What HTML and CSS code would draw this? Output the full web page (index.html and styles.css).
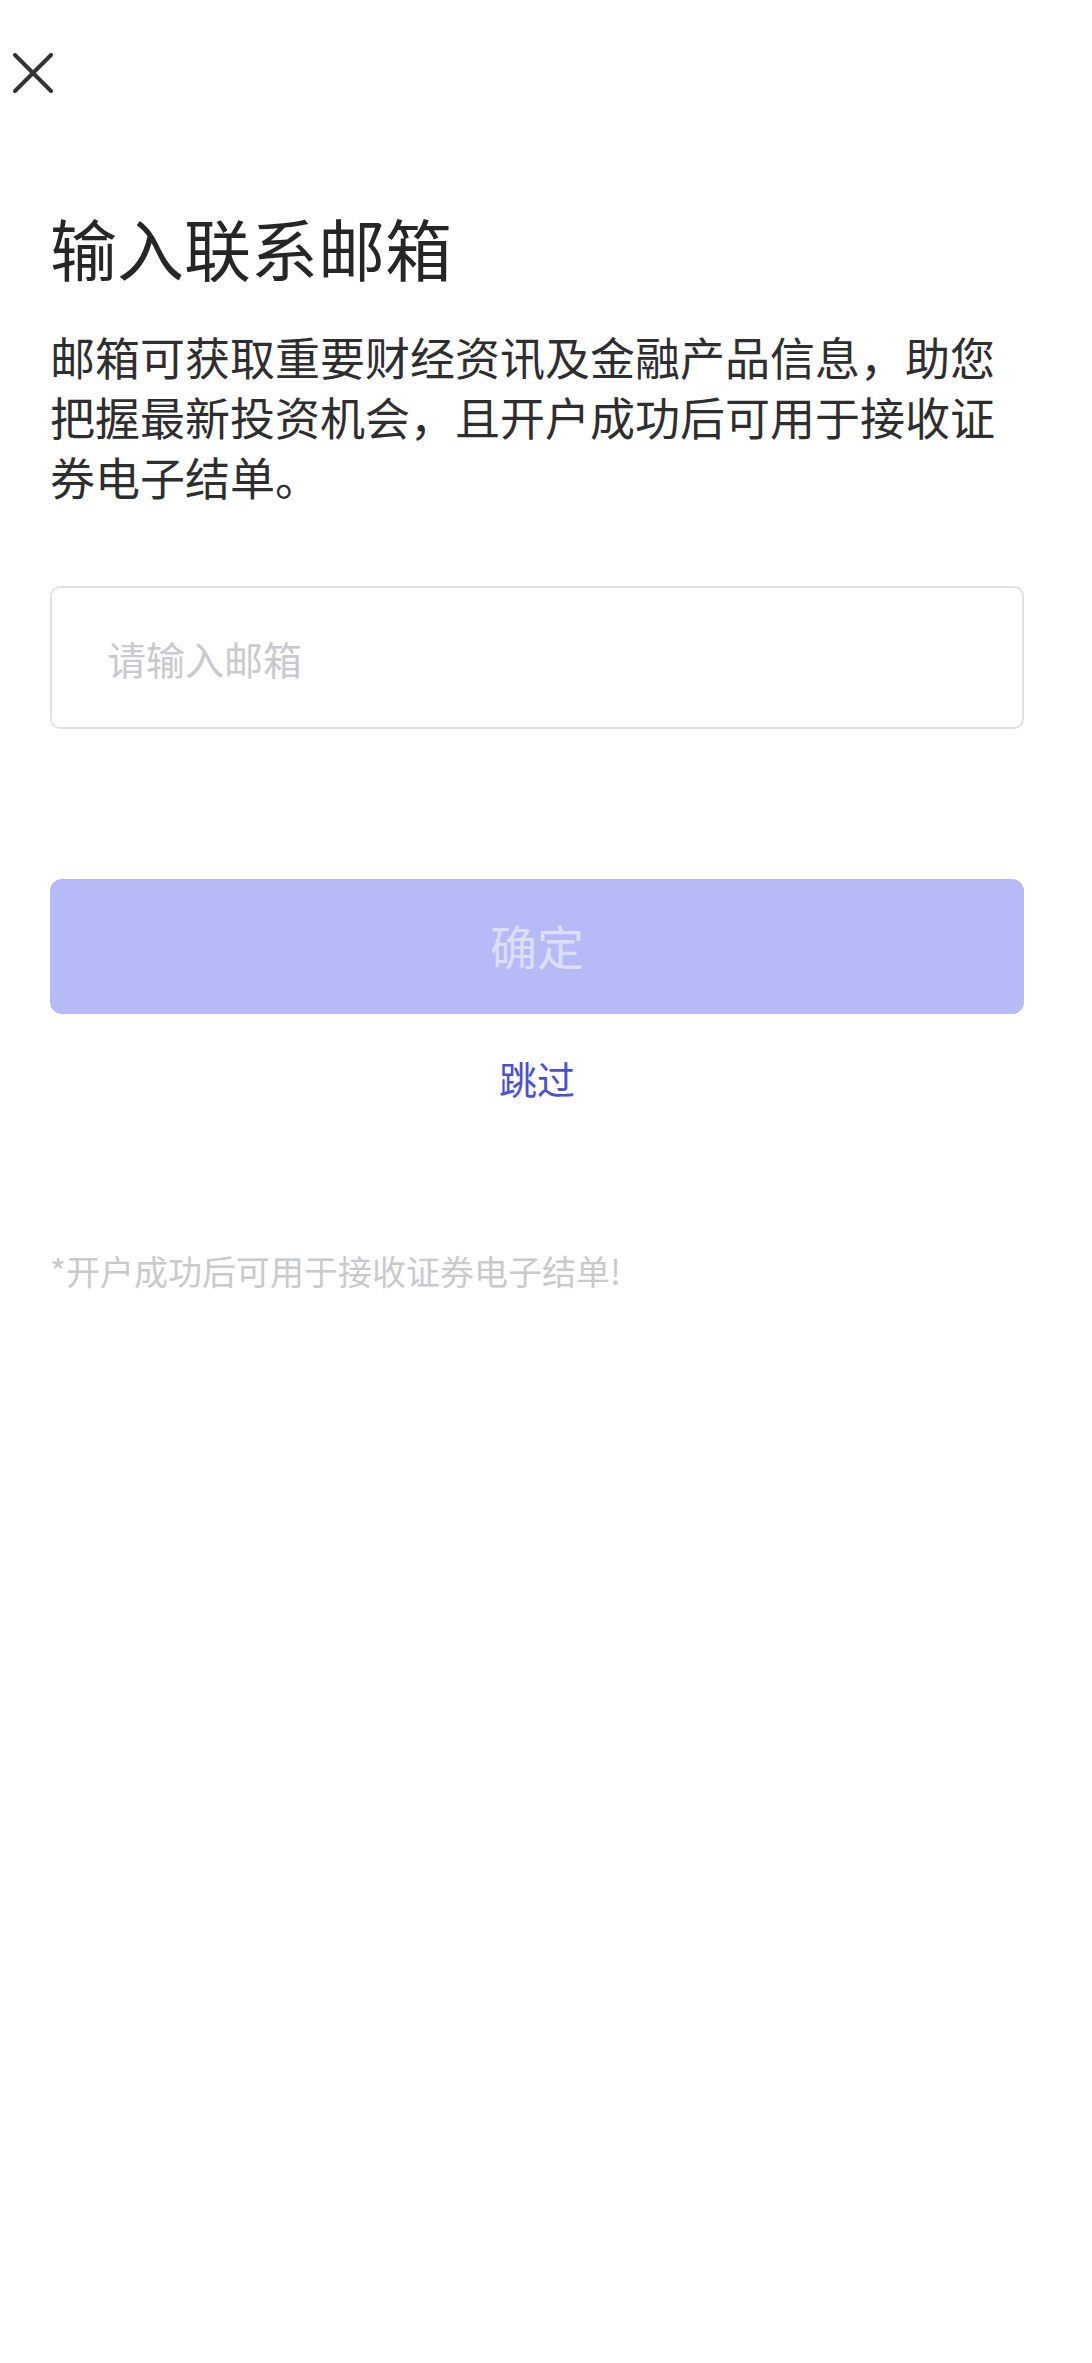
FILE: index.html
```html
<!DOCTYPE html>
<html lang="zh-CN">
<head>
    <meta charset="UTF-8">
    <meta name="viewport" content="width=device-width, initial-scale=1.0">
    <title>输入联系邮箱</title>
    <link rel="stylesheet" href="styles.css">
</head>
<body>
    <div class="top-bar">
        <a href="#" class="close" aria-label="关闭">
            <svg width="40" height="40" viewBox="0 0 40 40">
                <path d="M2 2 L38 38 M38 2 L2 38" stroke="#333338" stroke-width="4" stroke-linecap="round" fill="none"/>
            </svg>
        </a>
    </div>

    <div class="container">
        <h1 class="title">输入联系邮箱</h1>
        <p class="desc">邮箱可获取重要财经资讯及金融产品信息，助您把握最新投资机会，且开户成功后可用于接收证券电子结单。</p>

        <form class="email-form" onsubmit="return false">
            <input type="email" class="email-input" placeholder="请输入邮箱">
            <button type="submit" class="submit-btn" disabled>确定</button>
        </form>

        <div class="skip">
            <a href="#">跳过</a>
        </div>

        <p class="note">*开户成功后可用于接收证券电子结单!</p>
    </div>
</body>
</html>
```

FILE: styles.css
```css
/* 邮箱输入页 */
body {
    margin: 0;
    background-color: #fff;
    font-family: "Noto Sans CJK SC", "Noto Sans", sans-serif;
    color: #333;
}
.top-bar {
    padding: 53px 0 0 13px;
    height: 40px;
}
.close {
    display: block;
    width: 40px;
    height: 40px;
}
.close svg {
    display: block;
}
.container {
    padding: 0 68px 0 50px;
}
.title {
    margin: 114px 0 0;
    font-size: 67px;
    line-height: 80px;
    font-weight: normal;
    color: #262629;
}
.desc {
    margin: 40px 0 0;
    font-size: 45px;
    line-height: 60px;
    color: #2e2e30;
}
.email-form {
    margin: 79px 0 0;
}
.email-input {
    display: block;
    width: 974px;
    height: 143px;
    box-sizing: border-box;
    padding: 0 0 0 55px;
    border: 2px solid #e2e2e4;
    border-radius: 10px;
    font-family: inherit;
    font-size: 39px;
    color: #333;
    outline: none;
}
.email-input::placeholder {
    color: #c9c9d0;
}
.submit-btn {
    display: block;
    width: 974px;
    height: 135px;
    margin-top: 150px;
    padding: 0 0 5px;
    border: none;
    border-radius: 12px;
    background-color: #b6bbf8;
    color: #dcdefa;
    font-family: inherit;
    font-size: 47px;
    cursor: pointer;
}
.skip {
    width: 974px;
    margin-top: 34px;
    text-align: center;
    font-size: 38px;
    line-height: 60px;
}
.skip a {
    color: #4a50d6;
    text-decoration: none;
}
.note {
    margin: 138px 0 0;
    font-size: 34px;
    line-height: 50px;
    color: #c9c9ce;
}
```
